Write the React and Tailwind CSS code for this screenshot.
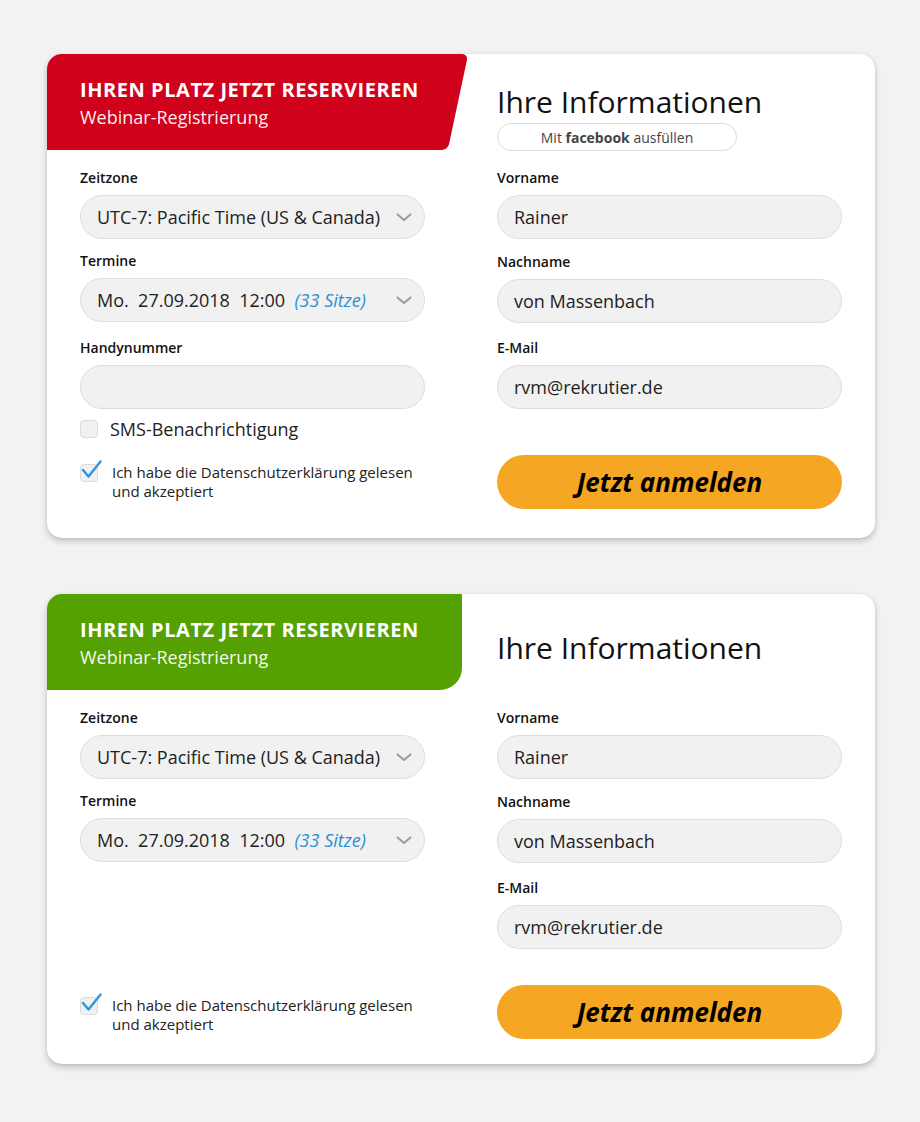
import React from 'react';

const font = { fontFamily: '"Open Sans", "Noto Sans", sans-serif' };

const Chevron = () => (
    <svg width="16" height="9" viewBox="0 0 16 9" className="shrink-0">
        <polyline points="1.5,1.5 8,7 14.5,1.5" fill="none" stroke="#9a9a9a" strokeWidth="2" strokeLinecap="round" strokeLinejoin="round" />
    </svg>
);

const Label = ({ children, className = '' }) => (
    <label className={`block text-[14px] leading-[20px] font-semibold text-[#111] mb-[7px] ${className}`}>{children}</label>
);

const Field = ({ value }) => (
    <div className="h-[44px] rounded-full bg-[#f1f1f1] border border-[#dedede] flex items-center pl-[16px] text-[18px] text-[#222]">
        {value}
    </div>
);

const Select = ({ children }) => (
    <div className="h-[44px] rounded-full bg-[#f1f1f1] border border-[#dedede] flex items-center justify-between pl-[16px] pr-[12px] text-[18px] text-[#222]">
        <span className="whitespace-nowrap">{children}</span>
        <Chevron />
    </div>
);

const Checkbox = ({ checked }) => (
    <span className="relative shrink-0 w-[18px] h-[18px] rounded-[4px] bg-[#f1f1f1] border border-[#dcdcdc]">
        {checked && (
            <svg width="24" height="20" viewBox="0 0 24 20" className="absolute left-0 top-[-4px] overflow-visible">
                <polyline points="2,9 7.5,15.5 19.5,0.5" fill="none" stroke="#2e93e0" strokeWidth="2.4" strokeLinecap="round" strokeLinejoin="round" />
            </svg>
        )}
    </span>
);

const Privacy = ({ className = '' }) => (
    <div className={`flex items-start gap-[14px] ${className}`}>
        <span className="mt-[1px] flex"><Checkbox checked /></span>
        <p className="text-[15px] leading-[19px] text-[#222]">
            Ich habe die Datenschutzerklärung gelesen<br />und akzeptiert
        </p>
    </div>
);

const SubmitButton = () => (
    <button className="w-full h-[54px] rounded-full bg-[#f5a623] text-[26px] font-bold italic text-black">
        Jetzt anmelden
    </button>
);

const TabText = () => (
    <div className="relative h-full pl-[33px] pt-[24px] text-white">
        <div className="text-[20px] leading-[24px] font-bold tracking-[0.55px]">IHREN PLATZ JETZT RESERVIEREN</div>
        <div className="text-[18px] leading-[24px] mt-[3px] text-white/95">Webinar-Registrierung</div>
    </div>
);

const RedTab = () => (
    <div className="relative w-[421px] h-[96px] shrink-0">
        <div className="absolute inset-y-0 left-0 w-[370px] bg-[#d0011b]"></div>
        <div className="absolute inset-y-0 right-[10px] w-[80px] bg-[#d0011b] -skew-x-[12deg] rounded-[6px]"></div>
        <TabText />
    </div>
);

const GreenTab = () => (
    <div className="relative w-[415px] h-[96px] shrink-0 bg-[#55a101] rounded-br-[22px]">
        <TabText />
    </div>
);

const RegistrationCard = ({ variant }) => {
    const isRed = variant === 'red';
    return (
        <div className="w-[828px] bg-white rounded-[15px] overflow-hidden shadow-[0_3px_6px_rgba(0,0,0,0.22),0_0_1px_rgba(0,0,0,0.12)]">
            <div className="flex h-[96px]">
                {isRed ? <RedTab /> : <GreenTab />}
                {isRed ? (
                    <div className="pl-[29px] pt-[30px]">
                        <h2 className="text-[30px] leading-[36px] text-[#111]">Ihre Informationen</h2>
                        <div className="mt-[3px] w-[240px] h-[28px] rounded-full border border-[#dadada] flex items-center justify-center text-[14px] text-[#444]">
                            Mit&nbsp;<span className="font-bold">facebook</span>&nbsp;ausfüllen
                        </div>
                    </div>
                ) : (
                    <div className="flex items-center pl-[35px] pt-[12px]">
                        <h2 className="text-[30px] leading-[36px] text-[#111]">Ihre Informationen</h2>
                    </div>
                )}
            </div>

            <div className={`px-[33px] pt-[18px] ${isRed ? 'pb-[29px]' : 'pb-[25px]'}`}>
                <div className="grid grid-cols-[345px_345px] gap-x-[72px]">
                    <div>
                        <Label>Zeitzone</Label>
                        <Select>UTC-7: Pacific Time (US &amp; Canada)</Select>
                        <Label className="mt-[12px]">Termine</Label>
                        <Select>
                            Mo.&nbsp; 27.09.2018&nbsp; 12:00&nbsp; <span className="italic text-[#2a8fd6]">(33 Sitze)</span>
                        </Select>
                        {isRed && (
                            <>
                                <Label className="mt-[16px]">Handynummer</Label>
                                <div className="h-[44px] rounded-full bg-[#f1f1f1] border border-[#dedede]"></div>
                                <div className="flex items-center gap-[12px] mt-[10px]">
                                    <Checkbox />
                                    <span className="text-[18px] leading-[20px] text-[#222]">SMS-Benachrichtigung</span>
                                </div>
                            </>
                        )}
                    </div>
                    <div>
                        <Label>Vorname</Label>
                        <Field value="Rainer" />
                        <Label className="mt-[13px]">Nachname</Label>
                        <Field value="von Massenbach" />
                        <Label className="mt-[15px]">E-Mail</Label>
                        <Field value="rvm@rekrutier.de" />
                    </div>
                </div>

                <div className={`grid grid-cols-[345px_345px] gap-x-[72px] items-center ${isRed ? 'mt-[16px]' : 'mt-[36px]'}`}>
                    <Privacy className={isRed ? '' : 'mt-[5px]'} />
                    <SubmitButton />
                </div>
            </div>
        </div>
    );
};

const App = () => {
    return (
        <div className="min-h-screen bg-[#f2f2f2] pt-[54px] pb-[58px] pl-[47px] flex flex-col items-start gap-[56px]" style={font}>
            <RegistrationCard variant="red" />
            <RegistrationCard variant="green" />
        </div>
    );
};

export default App;
